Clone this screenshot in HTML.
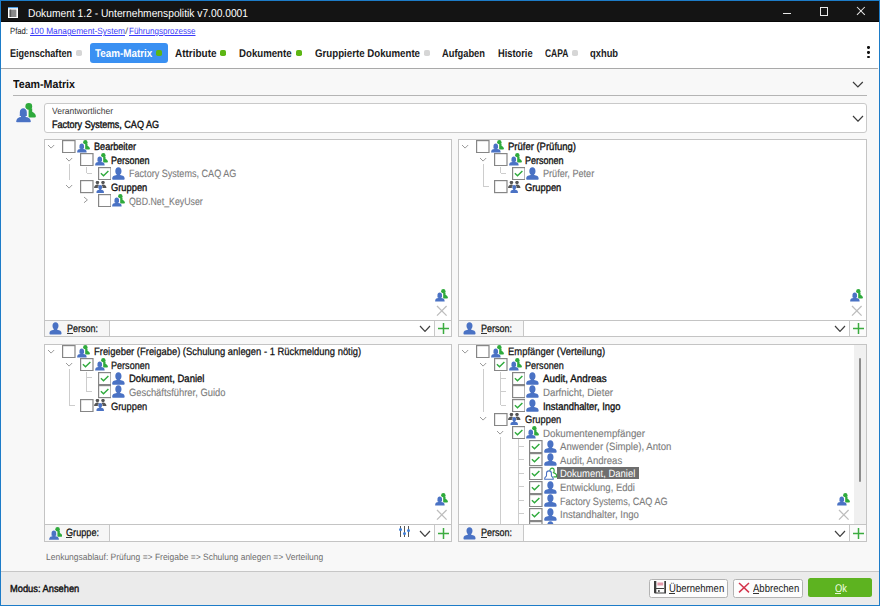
<!DOCTYPE html>
<html><head><meta charset="utf-8"><style>
html,body{margin:0;padding:0;width:880px;height:606px;overflow:hidden;background:#f7f7f7}
body>div,body>svg{position:absolute}
.t{font-family:"Liberation Sans",sans-serif;white-space:pre;transform-origin:0 0;text-rendering:geometricPrecision}
</style></head><body>
<div style="left:0px;top:0px;width:880px;height:606px;background:#1d7cc8"></div>
<div style="left:1px;top:1px;width:878px;height:604px;background:#f8f8f8"></div>
<div style="left:1px;top:1px;width:878px;height:21px;background:#141414"></div>
<div style="left:1px;top:21px;width:878px;height:1px;background:#070707"></div>
<div style="left:1px;top:22px;width:878px;height:46px;background:#fff"></div>
<svg style="left:8px;top:6.5px" width="10" height="11.5" viewBox="0 0 10 11.5"><rect x="0" y="0" width="10" height="11.5" fill="#fff"/><rect x="0" y="0" width="10" height="1.2" fill="#4a9ae0"/><rect x="1.6" y="2.6" width="6.8" height="7.4" fill="#8a8a8a"/><rect x="1.6" y="2.6" width="1.6" height="7.4" fill="#5a5a5a"/></svg>
<div class="t" style="left:27.5px;top:9px;font-size:11.4px;line-height:11.4px;font-weight:normal;color:#ffffff;transform:scaleX(0.9001);">Dokument 1.2 - Unternehmenspolitik v7.00.0001</div>
<div style="left:783px;top:13.3px;width:8.3px;height:1px;background:#e8e8e8"></div>
<div style="left:820.2px;top:7.4px;width:7.6px;height:7.6px;border:1px solid #e8e8e8;box-sizing:border-box;width:8.2px;height:8.2px"></div>
<svg style="left:856.2px;top:6.4px" width="9.8" height="9.8" viewBox="-1 -1 9.8 9.8"><path d="M0,0 L7.8,7.8 M7.8,0 L0,7.8" stroke="#e8e8e8" stroke-width="1.05" fill="none"/></svg>
<div class="t" style="left:10px;top:27px;font-size:9px;line-height:9px;font-weight:normal;color:#222;transform:scaleX(0.8565);">Pfad:</div>
<div class="t" style="left:30.3px;top:27px;font-size:9px;line-height:9px;font-weight:normal;color:#3a3af8;transform:scaleX(0.9218);text-decoration:underline;">100 Management-System</div>
<div class="t" style="left:125.3px;top:27px;font-size:9px;line-height:9px;font-weight:normal;color:#666;transform:scaleX(1.2720);">/</div>
<div class="t" style="left:128.9px;top:27px;font-size:9px;line-height:9px;font-weight:normal;color:#3a3af8;transform:scaleX(0.8921);text-decoration:underline;">Führungsprozesse</div>
<div style="left:89.8px;top:43.2px;width:78.2px;height:19.7px;background:#3a90f2;border-radius:3px"></div>
<div class="t" style="left:10px;top:49px;font-size:11.2px;line-height:11.2px;font-weight:bold;color:#1a1a1a;transform:scaleX(0.8108);">Eigenschaften</div>
<div style="left:76.4px;top:50px;width:5.8px;height:5.9px;background:#d6d6d6;border-radius:1.8px"></div>
<div class="t" style="left:94.5px;top:49px;font-size:11.2px;line-height:11.2px;font-weight:bold;color:#fff;transform:scaleX(0.8805);">Team-Matrix</div>
<div style="left:156.20000000000002px;top:50px;width:5.8px;height:5.9px;background:#5db614;border-radius:1.8px"></div>
<div class="t" style="left:174.5px;top:49px;font-size:11.2px;line-height:11.2px;font-weight:bold;color:#1a1a1a;transform:scaleX(0.8904);">Attribute</div>
<div style="left:220.4px;top:50px;width:5.8px;height:5.9px;background:#5db614;border-radius:1.8px"></div>
<div class="t" style="left:239px;top:49px;font-size:11.2px;line-height:11.2px;font-weight:bold;color:#1a1a1a;transform:scaleX(0.8634);">Dokumente</div>
<div style="left:296.0px;top:50px;width:5.8px;height:5.9px;background:#5db614;border-radius:1.8px"></div>
<div class="t" style="left:314.7px;top:49px;font-size:11.2px;line-height:11.2px;font-weight:bold;color:#1a1a1a;transform:scaleX(0.8662);">Gruppierte Dokumente</div>
<div style="left:424.09999999999997px;top:50px;width:5.8px;height:5.9px;background:#d6d6d6;border-radius:1.8px"></div>
<div class="t" style="left:442.4px;top:49px;font-size:11.2px;line-height:11.2px;font-weight:bold;color:#1a1a1a;transform:scaleX(0.8334);">Aufgaben</div>
<div class="t" style="left:498px;top:49px;font-size:11.2px;line-height:11.2px;font-weight:bold;color:#1a1a1a;transform:scaleX(0.8306);">Historie</div>
<div class="t" style="left:544.6px;top:49px;font-size:11.2px;line-height:11.2px;font-weight:bold;color:#1a1a1a;transform:scaleX(0.7579);">CAPA</div>
<div style="left:572.4px;top:50px;width:5.8px;height:5.9px;background:#d6d6d6;border-radius:1.8px"></div>
<div class="t" style="left:590.4px;top:49px;font-size:11.2px;line-height:11.2px;font-weight:bold;color:#1a1a1a;transform:scaleX(0.8372);">qxhub</div>
<div style="left:867.3px;top:46.45px;width:2.3px;height:2.3px;background:#111;border-radius:50%"></div>
<div style="left:867.3px;top:51.25px;width:2.3px;height:2.3px;background:#111;border-radius:50%"></div>
<div style="left:867.3px;top:55.95px;width:2.3px;height:2.3px;background:#111;border-radius:50%"></div>
<div style="left:1px;top:68px;width:877px;height:1px;background:#a9a9a9"></div>
<div class="t" style="left:13px;top:80px;font-size:11.5px;line-height:11.5px;font-weight:bold;color:#111;transform:scaleX(0.9269);">Team-Matrix</div>
<svg style="left:852.2px;top:80.9px" width="11.8" height="7" viewBox="-1 -1 11.8 7"><polyline points="0,0 4.9,5 9.8,0" fill="none" stroke="#3c3c3c" stroke-width="1.2"/></svg>
<div style="left:13px;top:95px;width:854px;height:1px;background:#b4b4b4"></div>
<svg style="left:16.3px;top:102.8px" width="20" height="20" viewBox="-0.3 0 20 20"><ellipse cx="12.5" cy="3.4" rx="3.4" ry="3.3" fill="#2faa3c"/><path d="M12.3,5.5 L15.9,5.5 L15.9,8.8 C17.5,9.8 19.6,11.2 19.6,13.2 Q19.6,14.6 18.2,14.6 L12.3,14.6 Z" fill="#2faa3c"/><g fill="#4a72c4" stroke="#fff" stroke-width="1.1" paint-order="stroke"><path d="M7,5.3 C9.1,5.3 10.5,7 10.5,9.2 L10.5,11.5 C10.5,12.1 10.8,12.5 10.9,12.6 L9.3,13.2 L9.3,14 C12.2,14.3 13.6,15.2 14.1,16.7 L14.5,18.3 Q14.7,19.2 13.8,19.2 L0.6,19.2 Q-0.3,19.2 -0.1,18.3 L0.3,16.7 C0.8,15.2 2.2,14.3 4.7,14 L4.7,13.2 L3.1,12.6 C3.2,12.5 3.5,12.1 3.5,11.5 L3.5,9.2 C3.5,7 4.9,5.3 7,5.3 Z"/></g></svg>
<div style="left:44px;top:103px;width:823px;height:30px;background:#fff;border:1px solid #c9c9c9;border-radius:3px;box-sizing:border-box"></div>
<div class="t" style="left:51.5px;top:107px;font-size:9px;line-height:9px;font-weight:normal;color:#3a3a3a;transform:scaleX(0.9453);">Verantwortlicher</div>
<div class="t" style="left:51.8px;top:120px;font-size:10.5px;line-height:10.5px;font-weight:normal;color:#111;transform:scaleX(0.8610);-webkit-text-stroke:0.4px #111;">Factory Systems, CAQ AG</div>
<svg style="left:851.7px;top:115px" width="12" height="7.2" viewBox="-1 -1 12 7.2"><polyline points="0,0 5.0,5.2 10,0" fill="none" stroke="#3c3c3c" stroke-width="1.2"/></svg>
<div style="left:44px;top:139px;width:408px;height:198px;background:#fff;border:1px solid #c4c4c4;box-sizing:border-box"></div>
<svg style="left:47.2px;top:143.5px" width="8.2" height="5.1" viewBox="-1 -1 8.2 5.1"><polyline points="0,0 3.1,3.1 6.2,0" fill="none" stroke="#9a9a9a" stroke-width="1"/></svg>
<svg style="left:62.4px;top:139.7px" width="13.6" height="13.2" viewBox="0 0 13.6 13.2"><rect x="0.6" y="0.6" width="12.4" height="12" fill="#fff" stroke="#868686" stroke-width="1.2"/></svg>
<svg style="left:77.0px;top:139.7px" width="13" height="13" viewBox="-0.3 0 20 20"><ellipse cx="12.5" cy="3.4" rx="3.4" ry="3.3" fill="#2faa3c"/><path d="M12.3,5.5 L15.9,5.5 L15.9,8.8 C17.5,9.8 19.6,11.2 19.6,13.2 Q19.6,14.6 18.2,14.6 L12.3,14.6 Z" fill="#2faa3c"/><g fill="#4a72c4" stroke="#fff" stroke-width="1.1" paint-order="stroke"><path d="M7,5.3 C9.1,5.3 10.5,7 10.5,9.2 L10.5,11.5 C10.5,12.1 10.8,12.5 10.9,12.6 L9.3,13.2 L9.3,14 C12.2,14.3 13.6,15.2 14.1,16.7 L14.5,18.3 Q14.7,19.2 13.8,19.2 L0.6,19.2 Q-0.3,19.2 -0.1,18.3 L0.3,16.7 C0.8,15.2 2.2,14.3 4.7,14 L4.7,13.2 L3.1,12.6 C3.2,12.5 3.5,12.1 3.5,11.5 L3.5,9.2 C3.5,7 4.9,5.3 7,5.3 Z"/></g></svg>
<div class="t" style="left:93.6px;top:142px;font-size:10.6px;line-height:10.6px;font-weight:normal;color:#111;transform:scaleX(0.8591);-webkit-text-stroke:0.35px #111;">Bearbeiter</div>
<svg style="left:64.80000000000001px;top:157.08px" width="8.2" height="5.1" viewBox="-1 -1 8.2 5.1"><polyline points="0,0 3.1,3.1 6.2,0" fill="none" stroke="#9a9a9a" stroke-width="1"/></svg>
<svg style="left:80.0px;top:153.28px" width="13.6" height="13.2" viewBox="0 0 13.6 13.2"><rect x="0.6" y="0.6" width="12.4" height="12" fill="#fff" stroke="#868686" stroke-width="1.2"/></svg>
<svg style="left:94.6px;top:153.28px" width="13" height="13" viewBox="-0.3 0 20 20"><ellipse cx="12.5" cy="3.4" rx="3.4" ry="3.3" fill="#2faa3c"/><path d="M12.3,5.5 L15.9,5.5 L15.9,8.8 C17.5,9.8 19.6,11.2 19.6,13.2 Q19.6,14.6 18.2,14.6 L12.3,14.6 Z" fill="#2faa3c"/><g fill="#4a72c4" stroke="#fff" stroke-width="1.1" paint-order="stroke"><path d="M7,5.3 C9.1,5.3 10.5,7 10.5,9.2 L10.5,11.5 C10.5,12.1 10.8,12.5 10.9,12.6 L9.3,13.2 L9.3,14 C12.2,14.3 13.6,15.2 14.1,16.7 L14.5,18.3 Q14.7,19.2 13.8,19.2 L0.6,19.2 Q-0.3,19.2 -0.1,18.3 L0.3,16.7 C0.8,15.2 2.2,14.3 4.7,14 L4.7,13.2 L3.1,12.6 C3.2,12.5 3.5,12.1 3.5,11.5 L3.5,9.2 C3.5,7 4.9,5.3 7,5.3 Z"/></g></svg>
<div class="t" style="left:111.2px;top:156px;font-size:10.6px;line-height:10.6px;font-weight:normal;color:#111;transform:scaleX(0.8488);-webkit-text-stroke:0.35px #111;">Personen</div>
<svg style="left:97.6px;top:166.85999999999999px" width="13.6" height="13.2" viewBox="0 0 13.6 13.2"><rect x="0.6" y="0.6" width="12.4" height="12" fill="#fff" stroke="#868686" stroke-width="1.2"/><polyline points="2.9,6.3 5.5,8.8 10.4,3.9" fill="none" stroke="#2faa3c" stroke-width="1.4"/></svg>
<svg style="left:112.19999999999999px;top:166.85999999999999px" width="13" height="13" viewBox="0 0 13 13"><path d="M6.4,0.3 C8.2,0.3 9.5,1.8 9.5,3.9 C9.5,5.5 8.9,6.8 8.1,7.5 L8.1,8.1 C10.9,8.5 12.6,9.6 12.6,11.3 L12.6,12 Q12.6,12.8 11.8,12.8 L1,12.8 Q0.2,12.8 0.2,12 L0.2,11.3 C0.2,9.6 1.9,8.5 4.7,8.1 L4.7,7.5 C3.9,6.8 3.3,5.5 3.3,3.9 C3.3,1.8 4.6,0.3 6.4,0.3 Z" fill="#4a72c4"/></svg>
<div class="t" style="left:128.79999999999998px;top:169px;font-size:10.6px;line-height:10.6px;font-weight:normal;color:#7c7c7c;transform:scaleX(0.8557);-webkit-text-stroke:0.12px #7c7c7c;">Factory Systems, CAQ AG</div>
<svg style="left:64.80000000000001px;top:184.24px" width="8.2" height="5.1" viewBox="-1 -1 8.2 5.1"><polyline points="0,0 3.1,3.1 6.2,0" fill="none" stroke="#9a9a9a" stroke-width="1"/></svg>
<svg style="left:80.0px;top:180.44px" width="13.6" height="13.2" viewBox="0 0 13.6 13.2"><rect x="0.6" y="0.6" width="12.4" height="12" fill="#fff" stroke="#868686" stroke-width="1.2"/></svg>
<svg style="left:94.19999999999999px;top:180.74px" width="13" height="13" viewBox="0 0 13 13"><circle cx="3.45" cy="1.6" r="1.75" fill="#555555"/><circle cx="9.0" cy="1.6" r="1.75" fill="#555555"/><path d="M0,6.9 C0.2,5.0 1.5,3.5 3.4,3.5 C4.3,3.5 5.0,3.8 5.6,4.4 L4.4,6.9 Z" fill="#555555"/><path d="M12.5,6.9 C12.3,5.0 11.0,3.5 9.1,3.5 C8.2,3.5 7.5,3.8 6.9,4.4 L8.1,6.9 Z" fill="#555555"/><g fill="#4a72c4" stroke="#fff" stroke-width="0.9" paint-order="stroke"><path d="M6.2,4.0 C7.3,4.0 8.1,4.9 8.1,6.2 C8.1,7.1 7.7,7.9 7.2,8.3 L7.2,8.8 C8.9,9.1 9.9,9.8 9.9,10.9 L9.9,11.9 L2.5,11.9 L2.5,10.9 C2.5,9.8 3.5,9.1 5.2,8.8 L5.2,8.3 C4.7,7.9 4.3,7.1 4.3,6.2 C4.3,4.9 5.1,4.0 6.2,4.0 Z"/></g></svg>
<div class="t" style="left:111.2px;top:183px;font-size:10.6px;line-height:10.6px;font-weight:normal;color:#111;transform:scaleX(0.8803);-webkit-text-stroke:0.35px #111;">Gruppen</div>
<svg style="left:83.1px;top:196.21999999999997px" width="5.4" height="7.8" viewBox="-1 -1 5.4 7.8"><polyline points="0,0 3.4,2.9 0,5.8" fill="none" stroke="#9a9a9a" stroke-width="1"/></svg>
<svg style="left:97.6px;top:194.01999999999998px" width="13.6" height="13.2" viewBox="0 0 13.6 13.2"><rect x="0.6" y="0.6" width="12.4" height="12" fill="#fff" stroke="#868686" stroke-width="1.2"/></svg>
<svg style="left:112.19999999999999px;top:194.01999999999998px" width="13" height="13" viewBox="-0.3 0 20 20"><ellipse cx="12.5" cy="3.4" rx="3.4" ry="3.3" fill="#2faa3c"/><path d="M12.3,5.5 L15.9,5.5 L15.9,8.8 C17.5,9.8 19.6,11.2 19.6,13.2 Q19.6,14.6 18.2,14.6 L12.3,14.6 Z" fill="#2faa3c"/><g fill="#4a72c4" stroke="#fff" stroke-width="1.1" paint-order="stroke"><path d="M7,5.3 C9.1,5.3 10.5,7 10.5,9.2 L10.5,11.5 C10.5,12.1 10.8,12.5 10.9,12.6 L9.3,13.2 L9.3,14 C12.2,14.3 13.6,15.2 14.1,16.7 L14.5,18.3 Q14.7,19.2 13.8,19.2 L0.6,19.2 Q-0.3,19.2 -0.1,18.3 L0.3,16.7 C0.8,15.2 2.2,14.3 4.7,14 L4.7,13.2 L3.1,12.6 C3.2,12.5 3.5,12.1 3.5,11.5 L3.5,9.2 C3.5,7 4.9,5.3 7,5.3 Z"/></g></svg>
<div class="t" style="left:128.79999999999998px;top:197px;font-size:10.6px;line-height:10.6px;font-weight:normal;color:#7c7c7c;transform:scaleX(0.8290);-webkit-text-stroke:0.12px #7c7c7c;">QBD.Net_KeyUser</div>
<div style="left:68.5px;top:164.48px;width:1px;height:15.159999999999997px;background:#cdcdcd"></div>
<div style="left:86.1px;top:167.45999999999998px;width:1px;height:5.700000000000017px;background:#cdcdcd"></div>
<div style="left:86.6px;top:172.66px;width:5.400000000000006px;height:1px;background:#cdcdcd"></div>
<svg style="left:435.2px;top:289.0px" width="13" height="13" viewBox="-0.3 0 20 20"><ellipse cx="12.5" cy="3.4" rx="3.4" ry="3.3" fill="#2faa3c"/><path d="M12.3,5.5 L15.9,5.5 L15.9,8.8 C17.5,9.8 19.6,11.2 19.6,13.2 Q19.6,14.6 18.2,14.6 L12.3,14.6 Z" fill="#2faa3c"/><g fill="#4a72c4" stroke="#fff" stroke-width="1.1" paint-order="stroke"><path d="M7,5.3 C9.1,5.3 10.5,7 10.5,9.2 L10.5,11.5 C10.5,12.1 10.8,12.5 10.9,12.6 L9.3,13.2 L9.3,14 C12.2,14.3 13.6,15.2 14.1,16.7 L14.5,18.3 Q14.7,19.2 13.8,19.2 L0.6,19.2 Q-0.3,19.2 -0.1,18.3 L0.3,16.7 C0.8,15.2 2.2,14.3 4.7,14 L4.7,13.2 L3.1,12.6 C3.2,12.5 3.5,12.1 3.5,11.5 L3.5,9.2 C3.5,7 4.9,5.3 7,5.3 Z"/></g></svg>
<svg style="left:436.1px;top:305.2px" width="11.6" height="11.6" viewBox="-1 -1 11.6 11.6"><path d="M0,0 L9.6,9.6 M9.6,0 L0,9.6" stroke="#bdbdbd" stroke-width="1.3" fill="none"/></svg>
<div style="left:44px;top:320px;width:408px;height:17px;background:#fff;border:1px solid #c4c4c4;box-sizing:border-box"></div>
<div style="left:45px;top:321px;width:64.5px;height:15px;background:#f6f6f6;border-right:1px solid #c8c8c8;box-sizing:border-box"></div>
<div style="left:434px;top:321px;width:17px;height:15px;background:#fbfbfb;border-left:1px solid #c8c8c8;box-sizing:border-box"></div>
<svg style="left:48.7px;top:322.1px" width="13.2" height="12.6" viewBox="0 0 13 13"><path d="M6.4,0.3 C8.2,0.3 9.5,1.8 9.5,3.9 C9.5,5.5 8.9,6.8 8.1,7.5 L8.1,8.1 C10.9,8.5 12.6,9.6 12.6,11.3 L12.6,12 Q12.6,12.8 11.8,12.8 L1,12.8 Q0.2,12.8 0.2,12 L0.2,11.3 C0.2,9.6 1.9,8.5 4.7,8.1 L4.7,7.5 C3.9,6.8 3.3,5.5 3.3,3.9 C3.3,1.8 4.6,0.3 6.4,0.3 Z" fill="#4a72c4"/></svg>
<div class="t" style="left:67.1px;top:324px;font-size:10.6px;line-height:10.6px;font-weight:normal;color:#111;transform:scaleX(0.8490);-webkit-text-stroke:0.25px #111;">Person:</div>
<div style="left:67.3px;top:333.3px;width:5.8px;height:0.9px;background:#333"></div>
<svg style="left:418.9px;top:324.6px" width="12" height="7.4" viewBox="-1 -1 12 7.4"><polyline points="0,0 5.0,5.4 10,0" fill="none" stroke="#404040" stroke-width="1.2"/></svg>
<svg style="left:436.5px;top:321.7px" width="13" height="13" viewBox="-1 -1 13 13"><path d="M5.5,0 L5.5,11 M0,5.5 L11,5.5" stroke="#3bab3f" stroke-width="1.5" fill="none"/></svg>
<div style="left:458px;top:139px;width:409px;height:198px;background:#fff;border:1px solid #c4c4c4;box-sizing:border-box"></div>
<svg style="left:461.2px;top:143.5px" width="8.2" height="5.1" viewBox="-1 -1 8.2 5.1"><polyline points="0,0 3.1,3.1 6.2,0" fill="none" stroke="#9a9a9a" stroke-width="1"/></svg>
<svg style="left:476.4px;top:139.7px" width="13.6" height="13.2" viewBox="0 0 13.6 13.2"><rect x="0.6" y="0.6" width="12.4" height="12" fill="#fff" stroke="#868686" stroke-width="1.2"/></svg>
<svg style="left:491.0px;top:139.7px" width="13" height="13" viewBox="-0.3 0 20 20"><ellipse cx="12.5" cy="3.4" rx="3.4" ry="3.3" fill="#2faa3c"/><path d="M12.3,5.5 L15.9,5.5 L15.9,8.8 C17.5,9.8 19.6,11.2 19.6,13.2 Q19.6,14.6 18.2,14.6 L12.3,14.6 Z" fill="#2faa3c"/><g fill="#4a72c4" stroke="#fff" stroke-width="1.1" paint-order="stroke"><path d="M7,5.3 C9.1,5.3 10.5,7 10.5,9.2 L10.5,11.5 C10.5,12.1 10.8,12.5 10.9,12.6 L9.3,13.2 L9.3,14 C12.2,14.3 13.6,15.2 14.1,16.7 L14.5,18.3 Q14.7,19.2 13.8,19.2 L0.6,19.2 Q-0.3,19.2 -0.1,18.3 L0.3,16.7 C0.8,15.2 2.2,14.3 4.7,14 L4.7,13.2 L3.1,12.6 C3.2,12.5 3.5,12.1 3.5,11.5 L3.5,9.2 C3.5,7 4.9,5.3 7,5.3 Z"/></g></svg>
<div class="t" style="left:507.59999999999997px;top:142px;font-size:10.6px;line-height:10.6px;font-weight:normal;color:#111;transform:scaleX(0.8953);-webkit-text-stroke:0.35px #111;">Prüfer (Prüfung)</div>
<svg style="left:478.8px;top:157.08px" width="8.2" height="5.1" viewBox="-1 -1 8.2 5.1"><polyline points="0,0 3.1,3.1 6.2,0" fill="none" stroke="#9a9a9a" stroke-width="1"/></svg>
<svg style="left:494.0px;top:153.28px" width="13.6" height="13.2" viewBox="0 0 13.6 13.2"><rect x="0.6" y="0.6" width="12.4" height="12" fill="#fff" stroke="#868686" stroke-width="1.2"/></svg>
<svg style="left:508.6px;top:153.28px" width="13" height="13" viewBox="-0.3 0 20 20"><ellipse cx="12.5" cy="3.4" rx="3.4" ry="3.3" fill="#2faa3c"/><path d="M12.3,5.5 L15.9,5.5 L15.9,8.8 C17.5,9.8 19.6,11.2 19.6,13.2 Q19.6,14.6 18.2,14.6 L12.3,14.6 Z" fill="#2faa3c"/><g fill="#4a72c4" stroke="#fff" stroke-width="1.1" paint-order="stroke"><path d="M7,5.3 C9.1,5.3 10.5,7 10.5,9.2 L10.5,11.5 C10.5,12.1 10.8,12.5 10.9,12.6 L9.3,13.2 L9.3,14 C12.2,14.3 13.6,15.2 14.1,16.7 L14.5,18.3 Q14.7,19.2 13.8,19.2 L0.6,19.2 Q-0.3,19.2 -0.1,18.3 L0.3,16.7 C0.8,15.2 2.2,14.3 4.7,14 L4.7,13.2 L3.1,12.6 C3.2,12.5 3.5,12.1 3.5,11.5 L3.5,9.2 C3.5,7 4.9,5.3 7,5.3 Z"/></g></svg>
<div class="t" style="left:525.2px;top:156px;font-size:10.6px;line-height:10.6px;font-weight:normal;color:#111;transform:scaleX(0.8488);-webkit-text-stroke:0.35px #111;">Personen</div>
<svg style="left:511.59999999999997px;top:166.85999999999999px" width="13.6" height="13.2" viewBox="0 0 13.6 13.2"><rect x="0.6" y="0.6" width="12.4" height="12" fill="#fff" stroke="#868686" stroke-width="1.2"/><polyline points="2.9,6.3 5.5,8.8 10.4,3.9" fill="none" stroke="#2faa3c" stroke-width="1.4"/></svg>
<svg style="left:526.1999999999999px;top:166.85999999999999px" width="13" height="13" viewBox="0 0 13 13"><path d="M6.4,0.3 C8.2,0.3 9.5,1.8 9.5,3.9 C9.5,5.5 8.9,6.8 8.1,7.5 L8.1,8.1 C10.9,8.5 12.6,9.6 12.6,11.3 L12.6,12 Q12.6,12.8 11.8,12.8 L1,12.8 Q0.2,12.8 0.2,12 L0.2,11.3 C0.2,9.6 1.9,8.5 4.7,8.1 L4.7,7.5 C3.9,6.8 3.3,5.5 3.3,3.9 C3.3,1.8 4.6,0.3 6.4,0.3 Z" fill="#4a72c4"/></svg>
<div class="t" style="left:542.8px;top:169px;font-size:10.6px;line-height:10.6px;font-weight:normal;color:#7c7c7c;transform:scaleX(0.8607);-webkit-text-stroke:0.12px #7c7c7c;">Prüfer, Peter</div>
<svg style="left:494.0px;top:180.44px" width="13.6" height="13.2" viewBox="0 0 13.6 13.2"><rect x="0.6" y="0.6" width="12.4" height="12" fill="#fff" stroke="#868686" stroke-width="1.2"/></svg>
<svg style="left:508.20000000000005px;top:180.74px" width="13" height="13" viewBox="0 0 13 13"><circle cx="3.45" cy="1.6" r="1.75" fill="#555555"/><circle cx="9.0" cy="1.6" r="1.75" fill="#555555"/><path d="M0,6.9 C0.2,5.0 1.5,3.5 3.4,3.5 C4.3,3.5 5.0,3.8 5.6,4.4 L4.4,6.9 Z" fill="#555555"/><path d="M12.5,6.9 C12.3,5.0 11.0,3.5 9.1,3.5 C8.2,3.5 7.5,3.8 6.9,4.4 L8.1,6.9 Z" fill="#555555"/><g fill="#4a72c4" stroke="#fff" stroke-width="0.9" paint-order="stroke"><path d="M6.2,4.0 C7.3,4.0 8.1,4.9 8.1,6.2 C8.1,7.1 7.7,7.9 7.2,8.3 L7.2,8.8 C8.9,9.1 9.9,9.8 9.9,10.9 L9.9,11.9 L2.5,11.9 L2.5,10.9 C2.5,9.8 3.5,9.1 5.2,8.8 L5.2,8.3 C4.7,7.9 4.3,7.1 4.3,6.2 C4.3,4.9 5.1,4.0 6.2,4.0 Z"/></g></svg>
<div class="t" style="left:525.2px;top:183px;font-size:10.6px;line-height:10.6px;font-weight:normal;color:#111;transform:scaleX(0.8803);-webkit-text-stroke:0.35px #111;">Gruppen</div>
<div style="left:482.5px;top:164.48px;width:1px;height:22.25999999999999px;background:#cdcdcd"></div>
<div style="left:483.0px;top:186.23999999999998px;width:5.5px;height:1px;background:#cdcdcd"></div>
<div style="left:500.1px;top:167.45999999999998px;width:1px;height:5.700000000000017px;background:#cdcdcd"></div>
<div style="left:500.6px;top:172.66px;width:5.399999999999977px;height:1px;background:#cdcdcd"></div>
<svg style="left:850.2px;top:289.0px" width="13" height="13" viewBox="-0.3 0 20 20"><ellipse cx="12.5" cy="3.4" rx="3.4" ry="3.3" fill="#2faa3c"/><path d="M12.3,5.5 L15.9,5.5 L15.9,8.8 C17.5,9.8 19.6,11.2 19.6,13.2 Q19.6,14.6 18.2,14.6 L12.3,14.6 Z" fill="#2faa3c"/><g fill="#4a72c4" stroke="#fff" stroke-width="1.1" paint-order="stroke"><path d="M7,5.3 C9.1,5.3 10.5,7 10.5,9.2 L10.5,11.5 C10.5,12.1 10.8,12.5 10.9,12.6 L9.3,13.2 L9.3,14 C12.2,14.3 13.6,15.2 14.1,16.7 L14.5,18.3 Q14.7,19.2 13.8,19.2 L0.6,19.2 Q-0.3,19.2 -0.1,18.3 L0.3,16.7 C0.8,15.2 2.2,14.3 4.7,14 L4.7,13.2 L3.1,12.6 C3.2,12.5 3.5,12.1 3.5,11.5 L3.5,9.2 C3.5,7 4.9,5.3 7,5.3 Z"/></g></svg>
<svg style="left:851.1px;top:305.2px" width="11.6" height="11.6" viewBox="-1 -1 11.6 11.6"><path d="M0,0 L9.6,9.6 M9.6,0 L0,9.6" stroke="#bdbdbd" stroke-width="1.3" fill="none"/></svg>
<div style="left:458px;top:320px;width:409px;height:17px;background:#fff;border:1px solid #c4c4c4;box-sizing:border-box"></div>
<div style="left:459px;top:321px;width:64.5px;height:15px;background:#f6f6f6;border-right:1px solid #c8c8c8;box-sizing:border-box"></div>
<div style="left:849px;top:321px;width:17px;height:15px;background:#fbfbfb;border-left:1px solid #c8c8c8;box-sizing:border-box"></div>
<svg style="left:462.7px;top:322.1px" width="13.2" height="12.6" viewBox="0 0 13 13"><path d="M6.4,0.3 C8.2,0.3 9.5,1.8 9.5,3.9 C9.5,5.5 8.9,6.8 8.1,7.5 L8.1,8.1 C10.9,8.5 12.6,9.6 12.6,11.3 L12.6,12 Q12.6,12.8 11.8,12.8 L1,12.8 Q0.2,12.8 0.2,12 L0.2,11.3 C0.2,9.6 1.9,8.5 4.7,8.1 L4.7,7.5 C3.9,6.8 3.3,5.5 3.3,3.9 C3.3,1.8 4.6,0.3 6.4,0.3 Z" fill="#4a72c4"/></svg>
<div class="t" style="left:481.1px;top:324px;font-size:10.6px;line-height:10.6px;font-weight:normal;color:#111;transform:scaleX(0.8490);-webkit-text-stroke:0.25px #111;">Person:</div>
<div style="left:481.3px;top:333.3px;width:5.8px;height:0.9px;background:#333"></div>
<svg style="left:833.9px;top:324.6px" width="12" height="7.4" viewBox="-1 -1 12 7.4"><polyline points="0,0 5.0,5.4 10,0" fill="none" stroke="#404040" stroke-width="1.2"/></svg>
<svg style="left:851.5px;top:321.7px" width="13" height="13" viewBox="-1 -1 13 13"><path d="M5.5,0 L5.5,11 M0,5.5 L11,5.5" stroke="#3bab3f" stroke-width="1.5" fill="none"/></svg>
<div style="left:44px;top:344px;width:408px;height:198px;background:#fff;border:1px solid #c4c4c4;box-sizing:border-box"></div>
<svg style="left:47.2px;top:348.5px" width="8.2" height="5.1" viewBox="-1 -1 8.2 5.1"><polyline points="0,0 3.1,3.1 6.2,0" fill="none" stroke="#9a9a9a" stroke-width="1"/></svg>
<svg style="left:62.4px;top:344.7px" width="13.6" height="13.2" viewBox="0 0 13.6 13.2"><rect x="0.6" y="0.6" width="12.4" height="12" fill="#fff" stroke="#868686" stroke-width="1.2"/></svg>
<svg style="left:77.0px;top:344.7px" width="13" height="13" viewBox="-0.3 0 20 20"><ellipse cx="12.5" cy="3.4" rx="3.4" ry="3.3" fill="#2faa3c"/><path d="M12.3,5.5 L15.9,5.5 L15.9,8.8 C17.5,9.8 19.6,11.2 19.6,13.2 Q19.6,14.6 18.2,14.6 L12.3,14.6 Z" fill="#2faa3c"/><g fill="#4a72c4" stroke="#fff" stroke-width="1.1" paint-order="stroke"><path d="M7,5.3 C9.1,5.3 10.5,7 10.5,9.2 L10.5,11.5 C10.5,12.1 10.8,12.5 10.9,12.6 L9.3,13.2 L9.3,14 C12.2,14.3 13.6,15.2 14.1,16.7 L14.5,18.3 Q14.7,19.2 13.8,19.2 L0.6,19.2 Q-0.3,19.2 -0.1,18.3 L0.3,16.7 C0.8,15.2 2.2,14.3 4.7,14 L4.7,13.2 L3.1,12.6 C3.2,12.5 3.5,12.1 3.5,11.5 L3.5,9.2 C3.5,7 4.9,5.3 7,5.3 Z"/></g></svg>
<div class="t" style="left:93.6px;top:347px;font-size:10.6px;line-height:10.6px;font-weight:normal;color:#111;transform:scaleX(0.8879);-webkit-text-stroke:0.25px #111;">Freigeber (Freigabe) (Schulung anlegen - 1 Rückmeldung nötig)</div>
<svg style="left:64.80000000000001px;top:362.08px" width="8.2" height="5.1" viewBox="-1 -1 8.2 5.1"><polyline points="0,0 3.1,3.1 6.2,0" fill="none" stroke="#9a9a9a" stroke-width="1"/></svg>
<svg style="left:80.0px;top:358.28px" width="13.6" height="13.2" viewBox="0 0 13.6 13.2"><rect x="0.6" y="0.6" width="12.4" height="12" fill="#fff" stroke="#868686" stroke-width="1.2"/><polyline points="2.9,6.3 5.5,8.8 10.4,3.9" fill="none" stroke="#2faa3c" stroke-width="1.4"/></svg>
<svg style="left:94.6px;top:358.28px" width="13" height="13" viewBox="-0.3 0 20 20"><ellipse cx="12.5" cy="3.4" rx="3.4" ry="3.3" fill="#2faa3c"/><path d="M12.3,5.5 L15.9,5.5 L15.9,8.8 C17.5,9.8 19.6,11.2 19.6,13.2 Q19.6,14.6 18.2,14.6 L12.3,14.6 Z" fill="#2faa3c"/><g fill="#4a72c4" stroke="#fff" stroke-width="1.1" paint-order="stroke"><path d="M7,5.3 C9.1,5.3 10.5,7 10.5,9.2 L10.5,11.5 C10.5,12.1 10.8,12.5 10.9,12.6 L9.3,13.2 L9.3,14 C12.2,14.3 13.6,15.2 14.1,16.7 L14.5,18.3 Q14.7,19.2 13.8,19.2 L0.6,19.2 Q-0.3,19.2 -0.1,18.3 L0.3,16.7 C0.8,15.2 2.2,14.3 4.7,14 L4.7,13.2 L3.1,12.6 C3.2,12.5 3.5,12.1 3.5,11.5 L3.5,9.2 C3.5,7 4.9,5.3 7,5.3 Z"/></g></svg>
<div class="t" style="left:111.2px;top:361px;font-size:10.6px;line-height:10.6px;font-weight:normal;color:#111;transform:scaleX(0.8554);-webkit-text-stroke:0.25px #111;">Personen</div>
<svg style="left:97.6px;top:371.86px" width="13.6" height="13.2" viewBox="0 0 13.6 13.2"><rect x="0.6" y="0.6" width="12.4" height="12" fill="#fff" stroke="#868686" stroke-width="1.2"/><polyline points="2.9,6.3 5.5,8.8 10.4,3.9" fill="none" stroke="#2faa3c" stroke-width="1.4"/></svg>
<svg style="left:112.19999999999999px;top:371.86px" width="13" height="13" viewBox="0 0 13 13"><path d="M6.4,0.3 C8.2,0.3 9.5,1.8 9.5,3.9 C9.5,5.5 8.9,6.8 8.1,7.5 L8.1,8.1 C10.9,8.5 12.6,9.6 12.6,11.3 L12.6,12 Q12.6,12.8 11.8,12.8 L1,12.8 Q0.2,12.8 0.2,12 L0.2,11.3 C0.2,9.6 1.9,8.5 4.7,8.1 L4.7,7.5 C3.9,6.8 3.3,5.5 3.3,3.9 C3.3,1.8 4.6,0.3 6.4,0.3 Z" fill="#4a72c4"/></svg>
<div class="t" style="left:128.79999999999998px;top:374px;font-size:10.6px;line-height:10.6px;font-weight:normal;color:#111;transform:scaleX(0.8955);-webkit-text-stroke:0.35px #111;">Dokument, Daniel</div>
<svg style="left:97.6px;top:385.44px" width="13.6" height="13.2" viewBox="0 0 13.6 13.2"><rect x="0.6" y="0.6" width="12.4" height="12" fill="#fff" stroke="#868686" stroke-width="1.2"/><polyline points="2.9,6.3 5.5,8.8 10.4,3.9" fill="none" stroke="#2faa3c" stroke-width="1.4"/></svg>
<svg style="left:112.19999999999999px;top:385.44px" width="13" height="13" viewBox="0 0 13 13"><path d="M6.4,0.3 C8.2,0.3 9.5,1.8 9.5,3.9 C9.5,5.5 8.9,6.8 8.1,7.5 L8.1,8.1 C10.9,8.5 12.6,9.6 12.6,11.3 L12.6,12 Q12.6,12.8 11.8,12.8 L1,12.8 Q0.2,12.8 0.2,12 L0.2,11.3 C0.2,9.6 1.9,8.5 4.7,8.1 L4.7,7.5 C3.9,6.8 3.3,5.5 3.3,3.9 C3.3,1.8 4.6,0.3 6.4,0.3 Z" fill="#4a72c4"/></svg>
<div class="t" style="left:128.79999999999998px;top:388px;font-size:10.6px;line-height:10.6px;font-weight:normal;color:#7c7c7c;transform:scaleX(0.8849);-webkit-text-stroke:0.12px #7c7c7c;">Geschäftsführer, Guido</div>
<svg style="left:80.0px;top:399.02px" width="13.6" height="13.2" viewBox="0 0 13.6 13.2"><rect x="0.6" y="0.6" width="12.4" height="12" fill="#fff" stroke="#868686" stroke-width="1.2"/></svg>
<svg style="left:94.19999999999999px;top:399.32px" width="13" height="13" viewBox="0 0 13 13"><circle cx="3.45" cy="1.6" r="1.75" fill="#555555"/><circle cx="9.0" cy="1.6" r="1.75" fill="#555555"/><path d="M0,6.9 C0.2,5.0 1.5,3.5 3.4,3.5 C4.3,3.5 5.0,3.8 5.6,4.4 L4.4,6.9 Z" fill="#555555"/><path d="M12.5,6.9 C12.3,5.0 11.0,3.5 9.1,3.5 C8.2,3.5 7.5,3.8 6.9,4.4 L8.1,6.9 Z" fill="#555555"/><g fill="#4a72c4" stroke="#fff" stroke-width="0.9" paint-order="stroke"><path d="M6.2,4.0 C7.3,4.0 8.1,4.9 8.1,6.2 C8.1,7.1 7.7,7.9 7.2,8.3 L7.2,8.8 C8.9,9.1 9.9,9.8 9.9,10.9 L9.9,11.9 L2.5,11.9 L2.5,10.9 C2.5,9.8 3.5,9.1 5.2,8.8 L5.2,8.3 C4.7,7.9 4.3,7.1 4.3,6.2 C4.3,4.9 5.1,4.0 6.2,4.0 Z"/></g></svg>
<div class="t" style="left:111.2px;top:402px;font-size:10.6px;line-height:10.6px;font-weight:normal;color:#111;transform:scaleX(0.8803);-webkit-text-stroke:0.25px #111;">Gruppen</div>
<div style="left:68.5px;top:369.48px;width:1px;height:35.839999999999975px;background:#cdcdcd"></div>
<div style="left:69.0px;top:404.82px;width:5.5px;height:1px;background:#cdcdcd"></div>
<div style="left:86.1px;top:371.56px;width:1px;height:20.180000000000007px;background:#cdcdcd"></div>
<div style="left:86.6px;top:377.15999999999997px;width:5.400000000000006px;height:1px;background:#cdcdcd"></div>
<div style="left:86.6px;top:391.24px;width:5.400000000000006px;height:1px;background:#cdcdcd"></div>
<svg style="left:435.2px;top:493.0px" width="13" height="13" viewBox="-0.3 0 20 20"><ellipse cx="12.5" cy="3.4" rx="3.4" ry="3.3" fill="#2faa3c"/><path d="M12.3,5.5 L15.9,5.5 L15.9,8.8 C17.5,9.8 19.6,11.2 19.6,13.2 Q19.6,14.6 18.2,14.6 L12.3,14.6 Z" fill="#2faa3c"/><g fill="#4a72c4" stroke="#fff" stroke-width="1.1" paint-order="stroke"><path d="M7,5.3 C9.1,5.3 10.5,7 10.5,9.2 L10.5,11.5 C10.5,12.1 10.8,12.5 10.9,12.6 L9.3,13.2 L9.3,14 C12.2,14.3 13.6,15.2 14.1,16.7 L14.5,18.3 Q14.7,19.2 13.8,19.2 L0.6,19.2 Q-0.3,19.2 -0.1,18.3 L0.3,16.7 C0.8,15.2 2.2,14.3 4.7,14 L4.7,13.2 L3.1,12.6 C3.2,12.5 3.5,12.1 3.5,11.5 L3.5,9.2 C3.5,7 4.9,5.3 7,5.3 Z"/></g></svg>
<svg style="left:436.1px;top:509.2px" width="11.6" height="11.6" viewBox="-1 -1 11.6 11.6"><path d="M0,0 L9.6,9.6 M9.6,0 L0,9.6" stroke="#bdbdbd" stroke-width="1.3" fill="none"/></svg>
<div style="left:44px;top:524px;width:408px;height:18px;background:#fff;border:1px solid #c4c4c4;box-sizing:border-box"></div>
<div style="left:45px;top:525px;width:64.5px;height:16px;background:#f6f6f6;border-right:1px solid #c8c8c8;box-sizing:border-box"></div>
<div style="left:434px;top:525px;width:17px;height:16px;background:#fbfbfb;border-left:1px solid #c8c8c8;box-sizing:border-box"></div>
<svg style="left:48.7px;top:526.8px" width="13.4" height="13.4" viewBox="-0.3 0 20 20"><ellipse cx="12.5" cy="3.4" rx="3.4" ry="3.3" fill="#2faa3c"/><path d="M12.3,5.5 L15.9,5.5 L15.9,8.8 C17.5,9.8 19.6,11.2 19.6,13.2 Q19.6,14.6 18.2,14.6 L12.3,14.6 Z" fill="#2faa3c"/><g fill="#4a72c4" stroke="#fff" stroke-width="1.1" paint-order="stroke"><path d="M7,5.3 C9.1,5.3 10.5,7 10.5,9.2 L10.5,11.5 C10.5,12.1 10.8,12.5 10.9,12.6 L9.3,13.2 L9.3,14 C12.2,14.3 13.6,15.2 14.1,16.7 L14.5,18.3 Q14.7,19.2 13.8,19.2 L0.6,19.2 Q-0.3,19.2 -0.1,18.3 L0.3,16.7 C0.8,15.2 2.2,14.3 4.7,14 L4.7,13.2 L3.1,12.6 C3.2,12.5 3.5,12.1 3.5,11.5 L3.5,9.2 C3.5,7 4.9,5.3 7,5.3 Z"/></g></svg>
<div class="t" style="left:66.1px;top:528px;font-size:10.6px;line-height:10.6px;font-weight:normal;color:#111;transform:scaleX(0.8620);-webkit-text-stroke:0.25px #111;">Gruppe:</div>
<div style="left:66.3px;top:537.3px;width:6.2px;height:0.9px;background:#333"></div>
<svg style="left:418.9px;top:529.6px" width="12" height="7.4" viewBox="-1 -1 12 7.4"><polyline points="0,0 5.0,5.4 10,0" fill="none" stroke="#404040" stroke-width="1.2"/></svg>
<svg style="left:436.5px;top:526.7px" width="13" height="13" viewBox="-1 -1 13 13"><path d="M5.5,0 L5.5,11 M0,5.5 L11,5.5" stroke="#3bab3f" stroke-width="1.5" fill="none"/></svg>
<div style="left:399.7px;top:525.9px;width:1.2px;height:11.6px;background:#555"></div>
<div style="left:398.7px;top:527.5px;width:3.2px;height:3.2px;background:#3c7dd8;border-radius:50%"></div>
<div style="left:403.7px;top:525.9px;width:1.2px;height:11.6px;background:#555"></div>
<div style="left:402.7px;top:532.3px;width:3.2px;height:3.2px;background:#3c7dd8;border-radius:50%"></div>
<div style="left:407.79999999999995px;top:525.9px;width:1.2px;height:11.6px;background:#555"></div>
<div style="left:406.79999999999995px;top:529.3px;width:3.2px;height:3.2px;background:#3c7dd8;border-radius:50%"></div>
<div style="left:458px;top:344px;width:409px;height:198px;background:#fff;border:1px solid #c4c4c4;box-sizing:border-box"></div>
<svg style="left:461.2px;top:348.5px" width="8.2" height="5.1" viewBox="-1 -1 8.2 5.1"><polyline points="0,0 3.1,3.1 6.2,0" fill="none" stroke="#9a9a9a" stroke-width="1"/></svg>
<svg style="left:476.4px;top:344.7px" width="13.6" height="13.2" viewBox="0 0 13.6 13.2"><rect x="0.6" y="0.6" width="12.4" height="12" fill="#fff" stroke="#868686" stroke-width="1.2"/></svg>
<svg style="left:491.0px;top:344.7px" width="13" height="13" viewBox="-0.3 0 20 20"><ellipse cx="12.5" cy="3.4" rx="3.4" ry="3.3" fill="#2faa3c"/><path d="M12.3,5.5 L15.9,5.5 L15.9,8.8 C17.5,9.8 19.6,11.2 19.6,13.2 Q19.6,14.6 18.2,14.6 L12.3,14.6 Z" fill="#2faa3c"/><g fill="#4a72c4" stroke="#fff" stroke-width="1.1" paint-order="stroke"><path d="M7,5.3 C9.1,5.3 10.5,7 10.5,9.2 L10.5,11.5 C10.5,12.1 10.8,12.5 10.9,12.6 L9.3,13.2 L9.3,14 C12.2,14.3 13.6,15.2 14.1,16.7 L14.5,18.3 Q14.7,19.2 13.8,19.2 L0.6,19.2 Q-0.3,19.2 -0.1,18.3 L0.3,16.7 C0.8,15.2 2.2,14.3 4.7,14 L4.7,13.2 L3.1,12.6 C3.2,12.5 3.5,12.1 3.5,11.5 L3.5,9.2 C3.5,7 4.9,5.3 7,5.3 Z"/></g></svg>
<div class="t" style="left:507.59999999999997px;top:347px;font-size:10.6px;line-height:10.6px;font-weight:normal;color:#111;transform:scaleX(0.8913);-webkit-text-stroke:0.25px #111;">Empfänger (Verteilung)</div>
<svg style="left:478.8px;top:362.08px" width="8.2" height="5.1" viewBox="-1 -1 8.2 5.1"><polyline points="0,0 3.1,3.1 6.2,0" fill="none" stroke="#9a9a9a" stroke-width="1"/></svg>
<svg style="left:494.0px;top:358.28px" width="13.6" height="13.2" viewBox="0 0 13.6 13.2"><rect x="0.6" y="0.6" width="12.4" height="12" fill="#fff" stroke="#868686" stroke-width="1.2"/><polyline points="2.9,6.3 5.5,8.8 10.4,3.9" fill="none" stroke="#2faa3c" stroke-width="1.4"/></svg>
<svg style="left:508.6px;top:358.28px" width="13" height="13" viewBox="-0.3 0 20 20"><ellipse cx="12.5" cy="3.4" rx="3.4" ry="3.3" fill="#2faa3c"/><path d="M12.3,5.5 L15.9,5.5 L15.9,8.8 C17.5,9.8 19.6,11.2 19.6,13.2 Q19.6,14.6 18.2,14.6 L12.3,14.6 Z" fill="#2faa3c"/><g fill="#4a72c4" stroke="#fff" stroke-width="1.1" paint-order="stroke"><path d="M7,5.3 C9.1,5.3 10.5,7 10.5,9.2 L10.5,11.5 C10.5,12.1 10.8,12.5 10.9,12.6 L9.3,13.2 L9.3,14 C12.2,14.3 13.6,15.2 14.1,16.7 L14.5,18.3 Q14.7,19.2 13.8,19.2 L0.6,19.2 Q-0.3,19.2 -0.1,18.3 L0.3,16.7 C0.8,15.2 2.2,14.3 4.7,14 L4.7,13.2 L3.1,12.6 C3.2,12.5 3.5,12.1 3.5,11.5 L3.5,9.2 C3.5,7 4.9,5.3 7,5.3 Z"/></g></svg>
<div class="t" style="left:525.2px;top:361px;font-size:10.6px;line-height:10.6px;font-weight:normal;color:#111;transform:scaleX(0.8554);-webkit-text-stroke:0.25px #111;">Personen</div>
<svg style="left:511.59999999999997px;top:371.86px" width="13.6" height="13.2" viewBox="0 0 13.6 13.2"><rect x="0.6" y="0.6" width="12.4" height="12" fill="#fff" stroke="#868686" stroke-width="1.2"/><polyline points="2.9,6.3 5.5,8.8 10.4,3.9" fill="none" stroke="#2faa3c" stroke-width="1.4"/></svg>
<svg style="left:526.1999999999999px;top:371.86px" width="13" height="13" viewBox="0 0 13 13"><path d="M6.4,0.3 C8.2,0.3 9.5,1.8 9.5,3.9 C9.5,5.5 8.9,6.8 8.1,7.5 L8.1,8.1 C10.9,8.5 12.6,9.6 12.6,11.3 L12.6,12 Q12.6,12.8 11.8,12.8 L1,12.8 Q0.2,12.8 0.2,12 L0.2,11.3 C0.2,9.6 1.9,8.5 4.7,8.1 L4.7,7.5 C3.9,6.8 3.3,5.5 3.3,3.9 C3.3,1.8 4.6,0.3 6.4,0.3 Z" fill="#4a72c4"/></svg>
<div class="t" style="left:542.8px;top:374px;font-size:10.6px;line-height:10.6px;font-weight:normal;color:#111;transform:scaleX(0.9244);-webkit-text-stroke:0.35px #111;">Audit, Andreas</div>
<svg style="left:511.59999999999997px;top:385.44px" width="13.6" height="13.2" viewBox="0 0 13.6 13.2"><rect x="0.6" y="0.6" width="12.4" height="12" fill="#fff" stroke="#868686" stroke-width="1.2"/></svg>
<svg style="left:526.1999999999999px;top:385.44px" width="13" height="13" viewBox="0 0 13 13"><path d="M6.4,0.3 C8.2,0.3 9.5,1.8 9.5,3.9 C9.5,5.5 8.9,6.8 8.1,7.5 L8.1,8.1 C10.9,8.5 12.6,9.6 12.6,11.3 L12.6,12 Q12.6,12.8 11.8,12.8 L1,12.8 Q0.2,12.8 0.2,12 L0.2,11.3 C0.2,9.6 1.9,8.5 4.7,8.1 L4.7,7.5 C3.9,6.8 3.3,5.5 3.3,3.9 C3.3,1.8 4.6,0.3 6.4,0.3 Z" fill="#4a72c4"/></svg>
<div class="t" style="left:542.8px;top:388px;font-size:10.6px;line-height:10.6px;font-weight:normal;color:#7c7c7c;transform:scaleX(0.9145);-webkit-text-stroke:0.12px #7c7c7c;">Darfnicht, Dieter</div>
<svg style="left:511.59999999999997px;top:399.02px" width="13.6" height="13.2" viewBox="0 0 13.6 13.2"><rect x="0.6" y="0.6" width="12.4" height="12" fill="#fff" stroke="#868686" stroke-width="1.2"/><polyline points="2.9,6.3 5.5,8.8 10.4,3.9" fill="none" stroke="#2faa3c" stroke-width="1.4"/></svg>
<svg style="left:526.1999999999999px;top:399.02px" width="13" height="13" viewBox="0 0 13 13"><path d="M6.4,0.3 C8.2,0.3 9.5,1.8 9.5,3.9 C9.5,5.5 8.9,6.8 8.1,7.5 L8.1,8.1 C10.9,8.5 12.6,9.6 12.6,11.3 L12.6,12 Q12.6,12.8 11.8,12.8 L1,12.8 Q0.2,12.8 0.2,12 L0.2,11.3 C0.2,9.6 1.9,8.5 4.7,8.1 L4.7,7.5 C3.9,6.8 3.3,5.5 3.3,3.9 C3.3,1.8 4.6,0.3 6.4,0.3 Z" fill="#4a72c4"/></svg>
<div class="t" style="left:542.8px;top:402px;font-size:10.6px;line-height:10.6px;font-weight:normal;color:#111;transform:scaleX(0.8890);-webkit-text-stroke:0.35px #111;">Instandhalter, Ingo</div>
<svg style="left:478.8px;top:416.40000000000003px" width="8.2" height="5.1" viewBox="-1 -1 8.2 5.1"><polyline points="0,0 3.1,3.1 6.2,0" fill="none" stroke="#9a9a9a" stroke-width="1"/></svg>
<svg style="left:494.0px;top:412.6px" width="13.6" height="13.2" viewBox="0 0 13.6 13.2"><rect x="0.6" y="0.6" width="12.4" height="12" fill="#fff" stroke="#868686" stroke-width="1.2"/></svg>
<svg style="left:508.20000000000005px;top:412.90000000000003px" width="13" height="13" viewBox="0 0 13 13"><circle cx="3.45" cy="1.6" r="1.75" fill="#555555"/><circle cx="9.0" cy="1.6" r="1.75" fill="#555555"/><path d="M0,6.9 C0.2,5.0 1.5,3.5 3.4,3.5 C4.3,3.5 5.0,3.8 5.6,4.4 L4.4,6.9 Z" fill="#555555"/><path d="M12.5,6.9 C12.3,5.0 11.0,3.5 9.1,3.5 C8.2,3.5 7.5,3.8 6.9,4.4 L8.1,6.9 Z" fill="#555555"/><g fill="#4a72c4" stroke="#fff" stroke-width="0.9" paint-order="stroke"><path d="M6.2,4.0 C7.3,4.0 8.1,4.9 8.1,6.2 C8.1,7.1 7.7,7.9 7.2,8.3 L7.2,8.8 C8.9,9.1 9.9,9.8 9.9,10.9 L9.9,11.9 L2.5,11.9 L2.5,10.9 C2.5,9.8 3.5,9.1 5.2,8.8 L5.2,8.3 C4.7,7.9 4.3,7.1 4.3,6.2 C4.3,4.9 5.1,4.0 6.2,4.0 Z"/></g></svg>
<div class="t" style="left:525.2px;top:415px;font-size:10.6px;line-height:10.6px;font-weight:normal;color:#111;transform:scaleX(0.8803);-webkit-text-stroke:0.25px #111;">Gruppen</div>
<svg style="left:496.4px;top:429.98px" width="8.2" height="5.1" viewBox="-1 -1 8.2 5.1"><polyline points="0,0 3.1,3.1 6.2,0" fill="none" stroke="#9a9a9a" stroke-width="1"/></svg>
<svg style="left:511.59999999999997px;top:426.18px" width="13.6" height="13.2" viewBox="0 0 13.6 13.2"><rect x="0.6" y="0.6" width="12.4" height="12" fill="#fff" stroke="#868686" stroke-width="1.2"/><polyline points="2.9,6.3 5.5,8.8 10.4,3.9" fill="none" stroke="#2faa3c" stroke-width="1.4"/></svg>
<svg style="left:526.1999999999999px;top:426.18px" width="13" height="13" viewBox="-0.3 0 20 20"><ellipse cx="12.5" cy="3.4" rx="3.4" ry="3.3" fill="#2faa3c"/><path d="M12.3,5.5 L15.9,5.5 L15.9,8.8 C17.5,9.8 19.6,11.2 19.6,13.2 Q19.6,14.6 18.2,14.6 L12.3,14.6 Z" fill="#2faa3c"/><g fill="#4a72c4" stroke="#fff" stroke-width="1.1" paint-order="stroke"><path d="M7,5.3 C9.1,5.3 10.5,7 10.5,9.2 L10.5,11.5 C10.5,12.1 10.8,12.5 10.9,12.6 L9.3,13.2 L9.3,14 C12.2,14.3 13.6,15.2 14.1,16.7 L14.5,18.3 Q14.7,19.2 13.8,19.2 L0.6,19.2 Q-0.3,19.2 -0.1,18.3 L0.3,16.7 C0.8,15.2 2.2,14.3 4.7,14 L4.7,13.2 L3.1,12.6 C3.2,12.5 3.5,12.1 3.5,11.5 L3.5,9.2 C3.5,7 4.9,5.3 7,5.3 Z"/></g></svg>
<div class="t" style="left:542.8px;top:429px;font-size:10.6px;line-height:10.6px;font-weight:normal;color:#7c7c7c;transform:scaleX(0.9213);-webkit-text-stroke:0.12px #7c7c7c;">Dokumentenempfänger</div>
<svg style="left:529.1999999999999px;top:439.76px" width="13.6" height="13.2" viewBox="0 0 13.6 13.2"><rect x="0.6" y="0.6" width="12.4" height="12" fill="#fff" stroke="#868686" stroke-width="1.2"/><polyline points="2.9,6.3 5.5,8.8 10.4,3.9" fill="none" stroke="#2faa3c" stroke-width="1.4"/></svg>
<svg style="left:543.8px;top:439.76px" width="13" height="13" viewBox="0 0 13 13"><path d="M6.4,0.3 C8.2,0.3 9.5,1.8 9.5,3.9 C9.5,5.5 8.9,6.8 8.1,7.5 L8.1,8.1 C10.9,8.5 12.6,9.6 12.6,11.3 L12.6,12 Q12.6,12.8 11.8,12.8 L1,12.8 Q0.2,12.8 0.2,12 L0.2,11.3 C0.2,9.6 1.9,8.5 4.7,8.1 L4.7,7.5 C3.9,6.8 3.3,5.5 3.3,3.9 C3.3,1.8 4.6,0.3 6.4,0.3 Z" fill="#4a72c4"/></svg>
<div class="t" style="left:560.4px;top:442px;font-size:10.6px;line-height:10.6px;font-weight:normal;color:#7c7c7c;transform:scaleX(0.9043);-webkit-text-stroke:0.12px #7c7c7c;">Anwender (Simple), Anton</div>
<svg style="left:529.1999999999999px;top:453.34px" width="13.6" height="13.2" viewBox="0 0 13.6 13.2"><rect x="0.6" y="0.6" width="12.4" height="12" fill="#fff" stroke="#868686" stroke-width="1.2"/><polyline points="2.9,6.3 5.5,8.8 10.4,3.9" fill="none" stroke="#2faa3c" stroke-width="1.4"/></svg>
<svg style="left:543.8px;top:453.34px" width="13" height="13" viewBox="0 0 13 13"><path d="M6.4,0.3 C8.2,0.3 9.5,1.8 9.5,3.9 C9.5,5.5 8.9,6.8 8.1,7.5 L8.1,8.1 C10.9,8.5 12.6,9.6 12.6,11.3 L12.6,12 Q12.6,12.8 11.8,12.8 L1,12.8 Q0.2,12.8 0.2,12 L0.2,11.3 C0.2,9.6 1.9,8.5 4.7,8.1 L4.7,7.5 C3.9,6.8 3.3,5.5 3.3,3.9 C3.3,1.8 4.6,0.3 6.4,0.3 Z" fill="#4a72c4"/></svg>
<div class="t" style="left:560.4px;top:456px;font-size:10.6px;line-height:10.6px;font-weight:normal;color:#7c7c7c;transform:scaleX(0.9027);-webkit-text-stroke:0.12px #7c7c7c;">Audit, Andreas</div>
<svg style="left:529.1999999999999px;top:466.91999999999996px" width="13.6" height="13.2" viewBox="0 0 13.6 13.2"><rect x="0.6" y="0.6" width="12.4" height="12" fill="#fff" stroke="#868686" stroke-width="1.2"/><polyline points="2.9,6.3 5.5,8.8 10.4,3.9" fill="none" stroke="#2faa3c" stroke-width="1.4"/></svg>
<svg style="left:543.8px;top:466.91999999999996px" width="14" height="14" viewBox="0 0 14 14"><g transform="translate(5.2,0.6)"><path d="M0.6,3.6 C0.6,1.6 1.8,0.5 2.9,0.5 C4.1,0.5 5,1.6 5,3.2 C5,4 4.7,4.6 4.3,5 C6.3,5.6 7.4,6.6 7.4,8.2 L7.4,9.3 L4.2,9.3" fill="none" stroke="#2faa3c" stroke-width="1.1"/></g><g transform="translate(0.2,3.4)"><path d="M4.75,0.5 C6.2,0.5 7.2,1.6 7.2,3.2 L7.2,5.2 C7.2,5.8 7.6,6.2 8.2,6.6 C8.8,7 9,7.6 9,8.3 L9,8.9 L0.5,8.9 L0.5,8.3 C0.5,7.6 0.7,7 1.3,6.6 C1.9,6.2 2.3,5.8 2.3,5.2 L2.3,3.2 C2.3,1.6 3.3,0.5 4.75,0.5 Z" fill="#fff" stroke="#4a72c4" stroke-width="1.1"/></g></svg>
<div style="left:557.1px;top:466.71999999999997px;width:82.3px;height:12.3px;background:#6e6e6e"></div>
<div class="t" style="left:560.4px;top:469px;font-size:10.6px;line-height:10.6px;font-weight:normal;color:#ffffff;transform:scaleX(0.8943);">Dokument, Daniel</div>
<svg style="left:529.1999999999999px;top:480.5px" width="13.6" height="13.2" viewBox="0 0 13.6 13.2"><rect x="0.6" y="0.6" width="12.4" height="12" fill="#fff" stroke="#868686" stroke-width="1.2"/><polyline points="2.9,6.3 5.5,8.8 10.4,3.9" fill="none" stroke="#2faa3c" stroke-width="1.4"/></svg>
<svg style="left:543.8px;top:480.5px" width="13" height="13" viewBox="0 0 13 13"><path d="M6.4,0.3 C8.2,0.3 9.5,1.8 9.5,3.9 C9.5,5.5 8.9,6.8 8.1,7.5 L8.1,8.1 C10.9,8.5 12.6,9.6 12.6,11.3 L12.6,12 Q12.6,12.8 11.8,12.8 L1,12.8 Q0.2,12.8 0.2,12 L0.2,11.3 C0.2,9.6 1.9,8.5 4.7,8.1 L4.7,7.5 C3.9,6.8 3.3,5.5 3.3,3.9 C3.3,1.8 4.6,0.3 6.4,0.3 Z" fill="#4a72c4"/></svg>
<div class="t" style="left:560.4px;top:483px;font-size:10.6px;line-height:10.6px;font-weight:normal;color:#7c7c7c;transform:scaleX(0.8957);-webkit-text-stroke:0.12px #7c7c7c;">Entwicklung, Eddi</div>
<svg style="left:529.1999999999999px;top:494.08px" width="13.6" height="13.2" viewBox="0 0 13.6 13.2"><rect x="0.6" y="0.6" width="12.4" height="12" fill="#fff" stroke="#868686" stroke-width="1.2"/><polyline points="2.9,6.3 5.5,8.8 10.4,3.9" fill="none" stroke="#2faa3c" stroke-width="1.4"/></svg>
<svg style="left:543.8px;top:494.08px" width="13" height="13" viewBox="0 0 13 13"><path d="M6.4,0.3 C8.2,0.3 9.5,1.8 9.5,3.9 C9.5,5.5 8.9,6.8 8.1,7.5 L8.1,8.1 C10.9,8.5 12.6,9.6 12.6,11.3 L12.6,12 Q12.6,12.8 11.8,12.8 L1,12.8 Q0.2,12.8 0.2,12 L0.2,11.3 C0.2,9.6 1.9,8.5 4.7,8.1 L4.7,7.5 C3.9,6.8 3.3,5.5 3.3,3.9 C3.3,1.8 4.6,0.3 6.4,0.3 Z" fill="#4a72c4"/></svg>
<div class="t" style="left:560.4px;top:497px;font-size:10.6px;line-height:10.6px;font-weight:normal;color:#7c7c7c;transform:scaleX(0.8581);-webkit-text-stroke:0.12px #7c7c7c;">Factory Systems, CAQ AG</div>
<svg style="left:529.1999999999999px;top:507.65999999999997px" width="13.6" height="13.2" viewBox="0 0 13.6 13.2"><rect x="0.6" y="0.6" width="12.4" height="12" fill="#fff" stroke="#868686" stroke-width="1.2"/><polyline points="2.9,6.3 5.5,8.8 10.4,3.9" fill="none" stroke="#2faa3c" stroke-width="1.4"/></svg>
<svg style="left:543.8px;top:507.65999999999997px" width="13" height="13" viewBox="0 0 13 13"><path d="M6.4,0.3 C8.2,0.3 9.5,1.8 9.5,3.9 C9.5,5.5 8.9,6.8 8.1,7.5 L8.1,8.1 C10.9,8.5 12.6,9.6 12.6,11.3 L12.6,12 Q12.6,12.8 11.8,12.8 L1,12.8 Q0.2,12.8 0.2,12 L0.2,11.3 C0.2,9.6 1.9,8.5 4.7,8.1 L4.7,7.5 C3.9,6.8 3.3,5.5 3.3,3.9 C3.3,1.8 4.6,0.3 6.4,0.3 Z" fill="#4a72c4"/></svg>
<div class="t" style="left:560.4px;top:510px;font-size:10.6px;line-height:10.6px;font-weight:normal;color:#7c7c7c;transform:scaleX(0.9051);-webkit-text-stroke:0.12px #7c7c7c;">Instandhalter, Ingo</div>
<svg style="left:529.1999999999999px;top:521.24px" width="13.6" height="13.2" viewBox="0 0 13.6 13.2"><rect x="0.6" y="0.6" width="12.4" height="12" fill="#fff" stroke="#868686" stroke-width="1.2"/><polyline points="2.9,6.3 5.5,8.8 10.4,3.9" fill="none" stroke="#2faa3c" stroke-width="1.4"/></svg>
<svg style="left:543.8px;top:521.24px" width="13" height="13" viewBox="0 0 13 13"><path d="M6.4,0.3 C8.2,0.3 9.5,1.8 9.5,3.9 C9.5,5.5 8.9,6.8 8.1,7.5 L8.1,8.1 C10.9,8.5 12.6,9.6 12.6,11.3 L12.6,12 Q12.6,12.8 11.8,12.8 L1,12.8 Q0.2,12.8 0.2,12 L0.2,11.3 C0.2,9.6 1.9,8.5 4.7,8.1 L4.7,7.5 C3.9,6.8 3.3,5.5 3.3,3.9 C3.3,1.8 4.6,0.3 6.4,0.3 Z" fill="#4a72c4"/></svg>
<div style="left:482.5px;top:369.48px;width:1px;height:42.31999999999999px;background:#cdcdcd"></div>
<div style="left:500.1px;top:371.56px;width:1px;height:33.75999999999999px;background:#cdcdcd"></div>
<div style="left:500.6px;top:377.65999999999997px;width:5.399999999999977px;height:1px;background:#cdcdcd"></div>
<div style="left:500.6px;top:391.24px;width:5.399999999999977px;height:1px;background:#cdcdcd"></div>
<div style="left:500.6px;top:404.82px;width:5.399999999999977px;height:1px;background:#cdcdcd"></div>
<div style="left:500.1px;top:437.38px;width:1px;height:87.86000000000001px;background:#cdcdcd"></div>
<div style="left:517.7px;top:439.46px;width:1px;height:85.78000000000003px;background:#cdcdcd"></div>
<div style="left:518.2px;top:445.56px;width:5.399999999999977px;height:1px;background:#cdcdcd"></div>
<div style="left:518.2px;top:459.14px;width:5.399999999999977px;height:1px;background:#cdcdcd"></div>
<div style="left:518.2px;top:472.72px;width:5.399999999999977px;height:1px;background:#cdcdcd"></div>
<div style="left:518.2px;top:486.3px;width:5.399999999999977px;height:1px;background:#cdcdcd"></div>
<div style="left:518.2px;top:499.88px;width:5.399999999999977px;height:1px;background:#cdcdcd"></div>
<div style="left:518.2px;top:513.46px;width:5.399999999999977px;height:1px;background:#cdcdcd"></div>
<div style="left:853.7px;top:345px;width:12.3px;height:179px;background:#f0f0f0"></div>
<div style="left:859px;top:358.1px;width:2.4px;height:124.2px;background:#8c8c8c;border-radius:1px"></div>
<svg style="left:837.2px;top:493.0px" width="13" height="13" viewBox="-0.3 0 20 20"><ellipse cx="12.5" cy="3.4" rx="3.4" ry="3.3" fill="#2faa3c"/><path d="M12.3,5.5 L15.9,5.5 L15.9,8.8 C17.5,9.8 19.6,11.2 19.6,13.2 Q19.6,14.6 18.2,14.6 L12.3,14.6 Z" fill="#2faa3c"/><g fill="#4a72c4" stroke="#fff" stroke-width="1.1" paint-order="stroke"><path d="M7,5.3 C9.1,5.3 10.5,7 10.5,9.2 L10.5,11.5 C10.5,12.1 10.8,12.5 10.9,12.6 L9.3,13.2 L9.3,14 C12.2,14.3 13.6,15.2 14.1,16.7 L14.5,18.3 Q14.7,19.2 13.8,19.2 L0.6,19.2 Q-0.3,19.2 -0.1,18.3 L0.3,16.7 C0.8,15.2 2.2,14.3 4.7,14 L4.7,13.2 L3.1,12.6 C3.2,12.5 3.5,12.1 3.5,11.5 L3.5,9.2 C3.5,7 4.9,5.3 7,5.3 Z"/></g></svg>
<svg style="left:838.1px;top:509.2px" width="11.6" height="11.6" viewBox="-1 -1 11.6 11.6"><path d="M0,0 L9.6,9.6 M9.6,0 L0,9.6" stroke="#bdbdbd" stroke-width="1.3" fill="none"/></svg>
<div style="left:458px;top:524px;width:409px;height:18px;background:#fff;border:1px solid #c4c4c4;box-sizing:border-box"></div>
<div style="left:459px;top:525px;width:64.5px;height:16px;background:#f6f6f6;border-right:1px solid #c8c8c8;box-sizing:border-box"></div>
<div style="left:849px;top:525px;width:17px;height:16px;background:#fbfbfb;border-left:1px solid #c8c8c8;box-sizing:border-box"></div>
<svg style="left:462.7px;top:527.1px" width="13.2" height="12.6" viewBox="0 0 13 13"><path d="M6.4,0.3 C8.2,0.3 9.5,1.8 9.5,3.9 C9.5,5.5 8.9,6.8 8.1,7.5 L8.1,8.1 C10.9,8.5 12.6,9.6 12.6,11.3 L12.6,12 Q12.6,12.8 11.8,12.8 L1,12.8 Q0.2,12.8 0.2,12 L0.2,11.3 C0.2,9.6 1.9,8.5 4.7,8.1 L4.7,7.5 C3.9,6.8 3.3,5.5 3.3,3.9 C3.3,1.8 4.6,0.3 6.4,0.3 Z" fill="#4a72c4"/></svg>
<div class="t" style="left:481.1px;top:528px;font-size:10.6px;line-height:10.6px;font-weight:normal;color:#111;transform:scaleX(0.8490);-webkit-text-stroke:0.25px #111;">Person:</div>
<div style="left:481.3px;top:537.3px;width:5.8px;height:0.9px;background:#333"></div>
<svg style="left:833.9px;top:529.6px" width="12" height="7.4" viewBox="-1 -1 12 7.4"><polyline points="0,0 5.0,5.4 10,0" fill="none" stroke="#404040" stroke-width="1.2"/></svg>
<svg style="left:851.5px;top:526.7px" width="13" height="13" viewBox="-1 -1 13 13"><path d="M5.5,0 L5.5,11 M0,5.5 L11,5.5" stroke="#3bab3f" stroke-width="1.5" fill="none"/></svg>
<div class="t" style="left:45.8px;top:553px;font-size:9.2px;line-height:9.2px;font-weight:normal;color:#6e6e6e;transform:scaleX(0.9229);">Lenkungsablauf: Prüfung =&gt; Freigabe =&gt; Schulung anlegen =&gt; Verteilung</div>
<div style="left:1px;top:570.8px;width:878px;height:1px;background:#c6c6c6"></div>
<div style="left:1px;top:571.8px;width:878px;height:33.2px;background:#ebebeb"></div>
<div class="t" style="left:9.7px;top:585px;font-size:10.2px;line-height:10.2px;font-weight:normal;color:#111;transform:scaleX(0.9130);-webkit-text-stroke:0.4px #111;">Modus: Ansehen</div>
<div style="left:649.1px;top:578.5px;width:78.6px;height:19px;background:#fdfdfd;border:1px solid #b3b3b3;border-radius:2.5px;box-sizing:border-box"></div>
<svg style="left:653.6px;top:581px" width="12.6" height="12.6" viewBox="0 0 12.6 12.6"><path d="M0,0 L2.3,0 L2.3,12.6 L0.9,12.6 L0,11.7 Z M10.3,0 L12.6,0 L12.6,12.6 L10.3,12.6 Z M2.3,6.9 L10.3,6.9 L10.3,7.9 L2.3,7.9 Z M2.3,11.6 L10.3,11.6 L10.3,12.6 L2.3,12.6 Z" fill="#3d3d3d"/><rect x="3.4" y="1.5" width="5.8" height="3" fill="#e59aab"/><circle cx="4.9" cy="10" r="0.9" fill="#333"/></svg>
<div class="t" style="left:669.4px;top:584px;font-size:11.2px;line-height:11.2px;font-weight:normal;color:#1a1a1a;transform:scaleX(0.8533);">Übernehmen</div>
<div style="left:669.2px;top:593.4px;width:6px;height:0.9px;background:#333"></div>
<div style="left:733.2px;top:578.5px;width:69.6px;height:19px;background:#fdfdfd;border:1px solid #b3b3b3;border-radius:2.5px;box-sizing:border-box"></div>
<svg style="left:738px;top:581.8px" width="12" height="11.4" viewBox="-1 -1 12 11.4"><path d="M0,0 L10,9.4 M10,0 L0,9.4" stroke="#d3344c" stroke-width="1.5" fill="none"/></svg>
<div class="t" style="left:752.8px;top:584px;font-size:11.2px;line-height:11.2px;font-weight:normal;color:#1a1a1a;transform:scaleX(0.8536);">Abbrechen</div>
<div style="left:753px;top:593.4px;width:6px;height:0.9px;background:#333"></div>
<div style="left:808.2px;top:578.2px;width:63.6px;height:19.1px;background:#5db320;border-radius:2.5px"></div>
<div class="t" style="left:834.5px;top:584px;font-size:11.2px;line-height:11.2px;font-weight:normal;color:#f4ffe8;transform:scaleX(0.8323);">Ok</div>
<div style="left:834.6px;top:593.4px;width:6.3px;height:0.9px;background:#e8f8d8"></div>
</body></html>
